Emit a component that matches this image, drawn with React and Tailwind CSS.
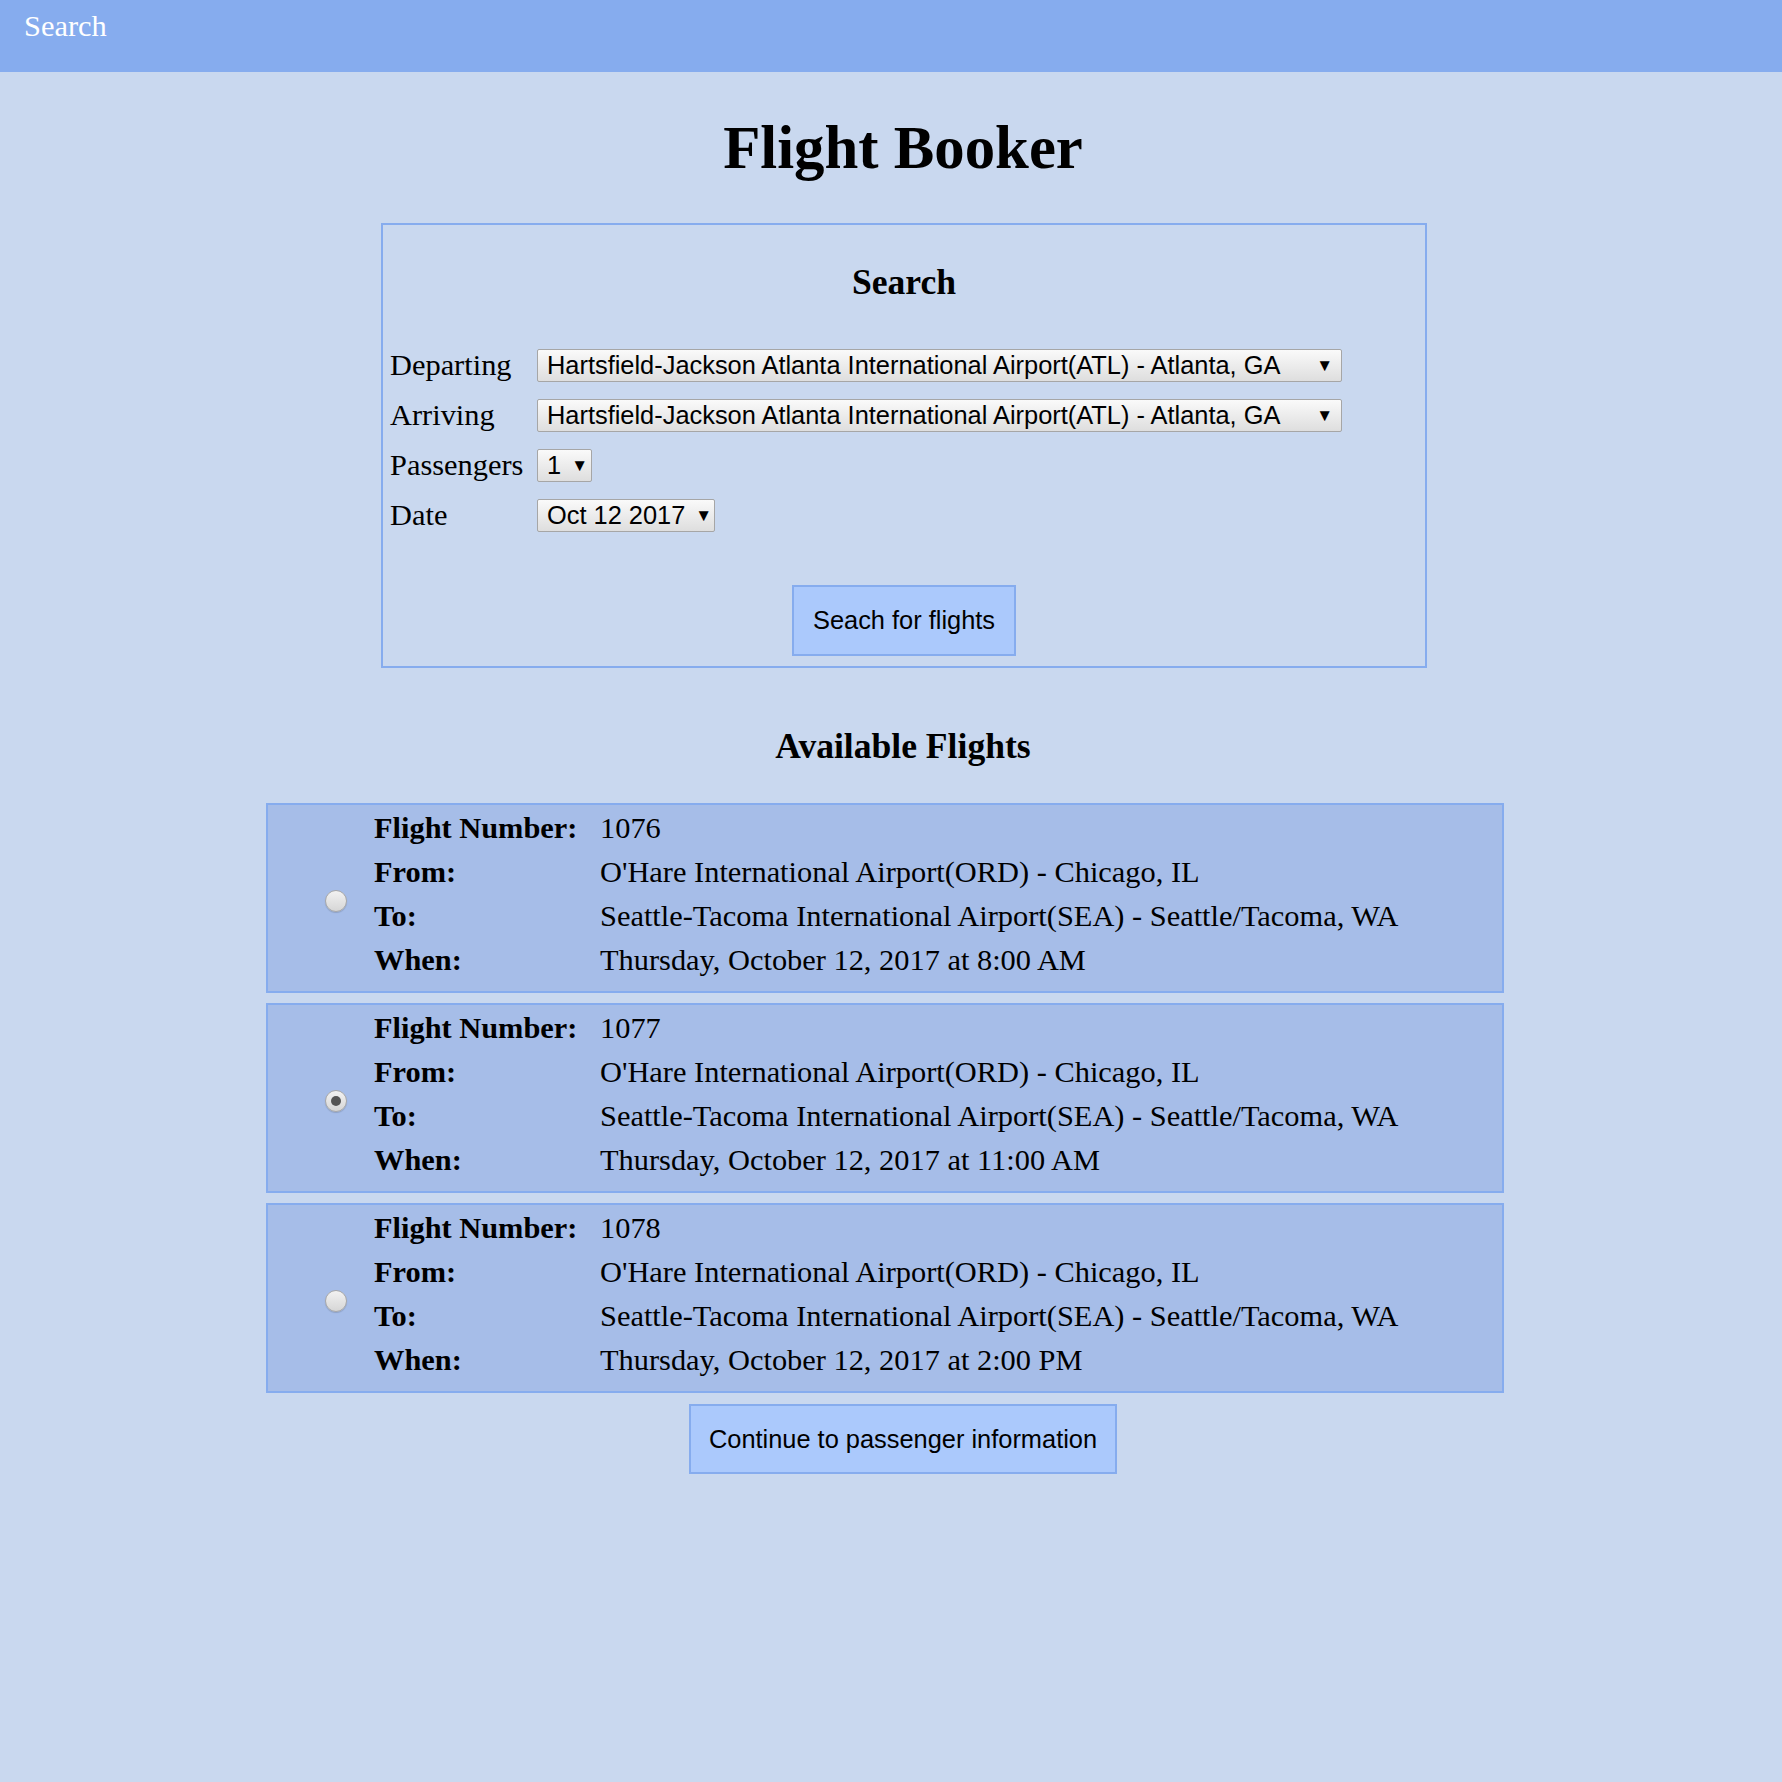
import React, { useState } from 'react'

const AIRPORT = 'Hartsfield-Jackson Atlanta International Airport(ATL) - Atlanta, GA'

const FLIGHTS = [
  { id: 1076, when: 'Thursday, October 12, 2017 at 8:00 AM' },
  { id: 1077, when: 'Thursday, October 12, 2017 at 11:00 AM' },
  { id: 1078, when: 'Thursday, October 12, 2017 at 2:00 PM' },
]

function FakeSelect({ value, width }) {
  return (
    <div className={`flex h-[33px] items-center justify-between rounded-[2px] border border-[#a6a6a6] bg-gradient-to-b from-[#fafafa] to-[#dedede] pl-[9px] pr-[8px] font-['Liberation_Sans',Arial,sans-serif] text-[25.4px] leading-[31px] text-black ${width}`}>
      <span className="whitespace-nowrap">{value}</span>
      <span className="ml-[10px] text-[17px] leading-none">▼</span>
    </div>
  )
}

function Radio({ checked, onClick }) {
  return (
    <button onClick={onClick}
      className="flex h-[22px] w-[22px] items-center justify-center rounded-full border border-[#a8a8a8] bg-gradient-to-b from-[#f2f2f2] to-[#d6d6d6] shadow-[0_1px_1px_rgba(0,0,0,0.15)]">
      {checked && <span className="h-[10px] w-[10px] rounded-full bg-[#555]" />}
    </button>
  )
}

function Row({ label, children }) {
  return (
    <div className="flex h-[44px] items-center leading-[44px]">
      <span className="w-[226px] font-bold">{label}</span>
      <span>{children}</span>
    </div>
  )
}

export default function App() {
  const [picked, setPicked] = useState(1077)

  return (
    <div className="min-h-[1782px] bg-[#c9d8ef] font-['Liberation_Serif','Times_New_Roman',serif] text-[30.4px] text-black">
      <div className="h-[72px] bg-[#86acee] px-[24px] leading-[52px] text-white">Search</div>

      <div className="pl-[24px]">
        <h1 className="mt-[41px] mb-[41px] text-center text-[60.8px] font-bold leading-[69px]">Flight Booker</h1>

        <div className="mx-auto w-[1046px] translate-x-[1px] border-2 border-[#86acee] px-[7px] pb-[10px]">
          <h3 className="mt-[37px] mb-[38px] text-center text-[35.6px] font-bold leading-[40px]">Search</h3>
          <div className="flex h-[50px] items-center leading-[50px]">
            <span className="w-[147px]">Departing</span>
            <FakeSelect value={AIRPORT} width="w-[805px]" />
          </div>
          <div className="flex h-[50px] items-center leading-[50px]">
            <span className="w-[147px]">Arriving</span>
            <FakeSelect value={AIRPORT} width="w-[805px]" />
          </div>
          <div className="flex h-[50px] items-center leading-[50px]">
            <span className="w-[147px]">Passengers</span>
            <FakeSelect value="1" width="w-[55px]" />
          </div>
          <div className="flex h-[50px] items-center leading-[50px]">
            <span className="w-[147px]">Date</span>
            <FakeSelect value="Oct 12 2017" width="w-[178px]" />
          </div>
          <div className="mt-[45px] flex justify-center">
            <button className="h-[71px] w-[224px] border-2 border-[#86acee] bg-[#abc9fc] font-['Liberation_Sans',Arial,sans-serif] text-[25.4px]">
              Seach for flights
            </button>
          </div>
        </div>

        <h3 className="mt-[58px] mb-[37px] text-center text-[35.6px] font-bold leading-[40px]">Available Flights</h3>

        <div className="ml-[242px] flex w-[1238px] flex-col gap-[10px]">
          {FLIGHTS.map(f => (
            <div key={f.id} className="flex h-[190px] items-center border-2 border-[#86acee] bg-[#a6bde8]">
              <div className="flex w-[106px] justify-center pl-[30px] pt-[6px]">
                <Radio checked={picked === f.id} onClick={() => setPicked(f.id)} />
              </div>
              <div className="self-start pt-[1px]">
                <Row label="Flight Number:">{f.id}</Row>
                <Row label="From:">O'Hare International Airport(ORD) - Chicago, IL</Row>
                <Row label="To:">Seattle-Tacoma International Airport(SEA) - Seattle/Tacoma, WA</Row>
                <Row label="When:">{f.when}</Row>
              </div>
            </div>
          ))}
        </div>

        <div className="mt-[11px] flex justify-center">
          <button className="h-[70px] w-[428px] border-2 border-[#86acee] bg-[#abc9fc] font-['Liberation_Sans',Arial,sans-serif] text-[25.4px]">
            Continue to passenger information
          </button>
        </div>
      </div>
    </div>
  )
}
